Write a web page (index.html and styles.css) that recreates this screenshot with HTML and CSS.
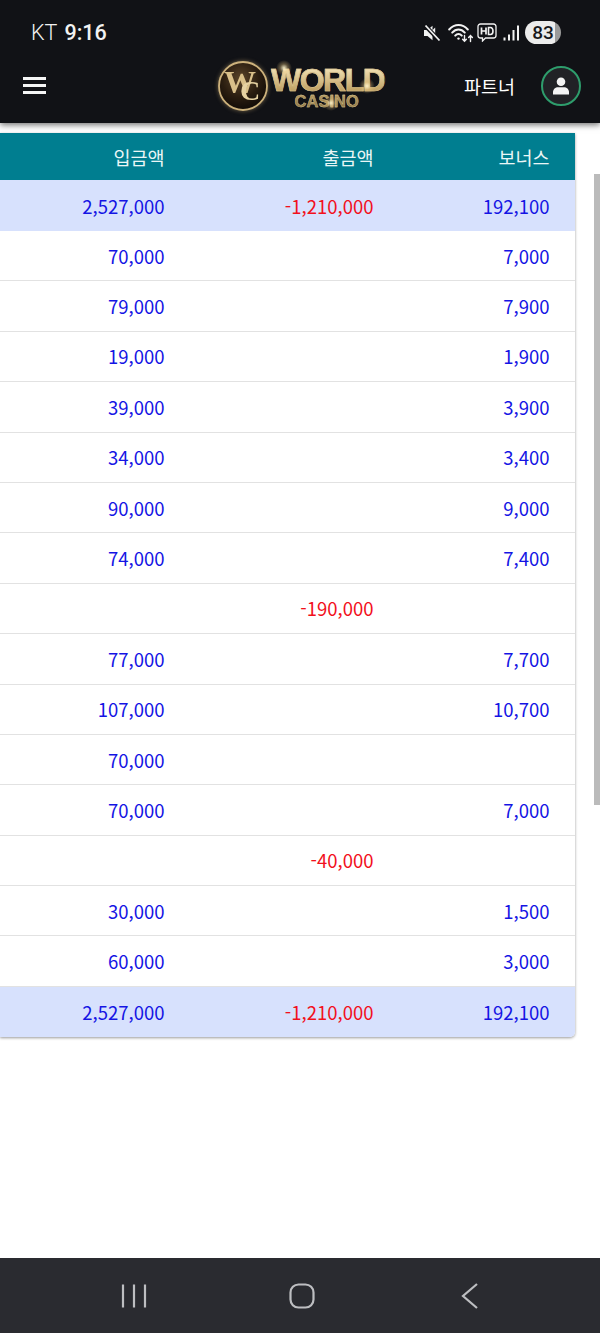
FILE: index.html
```html
<!DOCTYPE html>
<html lang="ko">
<head>
  <meta charset="UTF-8">
  <meta name="viewport" content="width=device-width, initial-scale=1.0">
  <title>World Casino</title>
  <link rel="stylesheet" href="styles.css">
</head>
<body>
  <div class="page">
    <!-- Status bar + top nav -->
    <header class="top">
      <div class="status-bar">
        <div class="status-left"><span class="carrier">KT</span><span class="clock">9:16</span></div>
        <div class="status-icons">
          <svg class="ico-mute" width="18" height="18" viewBox="0 0 18 18">
            <path d="M1 6h3.500L9.500 1.800V16.200L4.500 12H1z" fill="#f2f2f2"/>
            <path d="M9 6.500l3.200-3v7.500z" fill="#f2f2f2"/>
            <path d="M2 1.500L16.500 16.500" stroke="#111216" stroke-width="4"/>
            <path d="M2.500 1.500L16.500 16.500" stroke="#f2f2f2" stroke-width="1.800"/>
          </svg>
          <svg class="ico-wifi" width="26" height="21" viewBox="0 0 26 21" fill="none" stroke="#f2f2f2" stroke-linecap="round">
            <path d="M1.200 7.500C6.500 1.600 14.500 1.600 19.800 7.500" stroke-width="2"/>
            <path d="M4.200 10.600C8 6.400 13 6.400 16.800 10.600" stroke-width="2"/>
            <path d="M7.200 13.600C9.200 11.300 11.800 11.300 13.800 13.600" stroke-width="2"/>
            <circle cx="10.500" cy="16.600" r="1.200" fill="#f2f2f2" stroke="none"/>
            <path d="M16.500 13.500v5.500M14.600 17.200l1.900 2 1.900-2" stroke-width="1.400"/>
            <path d="M22.500 19.500v-6M20.600 15.400l1.900-2 1.900 2" stroke-width="1.400"/>
          </svg>
          <svg class="ico-hd" width="20" height="19" viewBox="0 0 20 19">
            <path d="M3.500 1h13A2.500 2.500 0 0 1 19 3.500v9a2.500 2.500 0 0 1-2.500 2.500H8.500L5.500 18V15h-2A2.500 2.500 0 0 1 1 12.500v-9A2.500 2.500 0 0 1 3.500 1z" fill="none" stroke="#f2f2f2" stroke-width="1.300"/>
            <path d="M4.500 4.500v7M9 4.500v7M4.500 8h4.500" stroke="#f2f2f2" stroke-width="1.700" fill="none"/>
            <path d="M11.500 4.500v7h2c3.300 0 3.300-7 0-7z" stroke="#f2f2f2" stroke-width="1.600" fill="none"/>
          </svg>
          <svg class="ico-signal" width="17" height="16" viewBox="0 0 17 16" fill="#f2f2f2">
            <rect x="0.500" y="12.500" width="2" height="3"/>
            <rect x="5" y="9.500" width="2" height="6"/>
            <rect x="9.500" y="5" width="2" height="10.500"/>
            <rect x="14" y="0.500" width="2" height="15"/>
          </svg>
          <div class="battery">83</div>
        </div>
      </div>
      <nav class="navbar">
        <div class="menu-btn"><span></span><span></span><span></span></div>
        <div class="logo">
          <svg class="logo-mark" width="52" height="52" viewBox="0 0 52 52">
            <defs>
              <radialGradient id="disc" cx="45%" cy="35%" r="70%">
                <stop offset="0" stop-color="#5b452a"/>
                <stop offset="0.55" stop-color="#2a1d10"/>
                <stop offset="1" stop-color="#0c0805"/>
              </radialGradient>
            </defs>
            <circle cx="26" cy="26" r="24" fill="url(#disc)" stroke="#cdb27c" stroke-width="1.800"/>
            <text x="7" y="33" class="logo-w">W</text>
            <text x="23" y="40" class="logo-c">C</text>
          </svg>
          <div class="logo-text">
            <span class="logo-world">WORLD</span>
            <span class="logo-casino">CASINO</span>
          </div>
          <span class="glint glint-a"></span>
          <span class="glint glint-b"></span>
          <span class="glint glint-c"></span>
        </div>
        <div class="nav-right">
          <span class="partner">파트너</span>
          <div class="avatar">
            <svg width="18" height="18" viewBox="0 0 18 18" fill="#f4f4f4">
              <circle cx="9" cy="4.800" r="4.300"/>
              <path d="M1 17.500v-2.300C1 12.300 3.500 10.300 6 10.300h6c2.500 0 5 2 5 4.900v2.300z"/>
            </svg>
          </div>
        </div>
      </nav>
    </header>

    <!-- Deposit table -->
    <main class="content">
      <table class="money-table">
        <colgroup>
          <col class="col-in"><col class="col-out"><col class="col-bonus">
        </colgroup>
        <thead>
          <tr><th>입금액</th><th>출금액</th><th>보너스</th></tr>
        </thead>
        <tbody>
          <tr class="total"><td class="in">2,527,000</td><td class="out">-1,210,000</td><td class="in">192,100</td></tr>
          <tr><td class="in">70,000</td><td></td><td class="in">7,000</td></tr>
          <tr><td class="in">79,000</td><td></td><td class="in">7,900</td></tr>
          <tr><td class="in">19,000</td><td></td><td class="in">1,900</td></tr>
          <tr><td class="in">39,000</td><td></td><td class="in">3,900</td></tr>
          <tr><td class="in">34,000</td><td></td><td class="in">3,400</td></tr>
          <tr><td class="in">90,000</td><td></td><td class="in">9,000</td></tr>
          <tr><td class="in">74,000</td><td></td><td class="in">7,400</td></tr>
          <tr><td></td><td class="out">-190,000</td><td></td></tr>
          <tr><td class="in">77,000</td><td></td><td class="in">7,700</td></tr>
          <tr><td class="in">107,000</td><td></td><td class="in">10,700</td></tr>
          <tr><td class="in">70,000</td><td></td><td></td></tr>
          <tr><td class="in">70,000</td><td></td><td class="in">7,000</td></tr>
          <tr><td></td><td class="out">-40,000</td><td></td></tr>
          <tr><td class="in">30,000</td><td></td><td class="in">1,500</td></tr>
          <tr><td class="in">60,000</td><td></td><td class="in">3,000</td></tr>
          <tr class="total"><td class="in">2,527,000</td><td class="out">-1,210,000</td><td class="in">192,100</td></tr>
        </tbody>
      </table>
      <div class="scroll-thumb"></div>
    </main>

    <!-- Android nav -->
    <footer class="system-nav">
      <svg width="26" height="26" viewBox="0 0 26 26" stroke="#bdbec1" stroke-width="2.200" fill="none">
        <path d="M2 1.500v23M13 1.500v23M24 1.500v23"/>
      </svg>
      <svg width="26" height="26" viewBox="0 0 26 26" stroke="#bdbec1" stroke-width="2.200" fill="none">
        <rect x="1.500" y="1.500" width="23" height="23" rx="8"/>
      </svg>
      <svg width="22" height="26" viewBox="0 0 22 26" stroke="#bdbec1" stroke-width="2.200" fill="none">
        <path d="M20 1L6 13l14 12"/>
      </svg>
    </footer>
  </div>
</body>
</html>
```

FILE: styles.css
```css
/* General Styles */
body {
  margin: 0;
  padding: 0;
  overflow: hidden;
  background: #fff;
  font-family: "Noto Sans CJK KR", "Noto Sans", sans-serif;
}

.page {
  width: 600px;
  height: 1333px;
  display: flex;
  flex-direction: column;
}

/* Top Area */
.top {
  height: 123px;
  flex-shrink: 0;
  background: #111216;
  box-shadow: 0 2px 6px rgba(0, 0, 0, 0.55);
  position: relative;
  z-index: 2;
}

.status-bar {
  height: 52px;
  padding: 13px 39px 0 31px;
  box-sizing: border-box;
  display: flex;
  justify-content: space-between;
  align-items: center;
  color: #f2f2f2;
  font-family: Roboto, sans-serif;
}

.status-left {
  display: flex;
  align-items: baseline;
  gap: 7px;
  font-size: 21.500px;
}

.carrier {
  font-weight: 300;
}

.clock {
  font-weight: 500;
}

.status-icons {
  display: flex;
  align-items: center;
}

.ico-mute {
  margin-right: 7px;
}

.ico-wifi {
  margin-right: 3px;
}

.ico-hd {
  margin-right: 6px;
}

.ico-signal {
  margin-right: 5px;
}

.battery {
  width: 36px;
  height: 23px;
  border-radius: 12px;
  background: linear-gradient(90deg, #ececec 84%, #9a9a9a 84%);
  color: #17181b;
  font-size: 19px;
  font-weight: 500;
  line-height: 23px;
  text-align: center;
}

.navbar {
  height: 71px;
  padding: 0 19px 4px 23px;
  box-sizing: border-box;
  display: flex;
  align-items: center;
}

.menu-btn {
  width: 23px;
  display: flex;
  flex-direction: column;
  gap: 4px;
}

.menu-btn span {
  height: 3px;
  background: #f5f5f5;
}

/* Logo */
.logo {
  margin-left: 171px;
  display: flex;
  align-items: center;
  gap: 2px;
  position: relative;
}

.logo-mark {
  filter: drop-shadow(0 0 2px rgba(210, 180, 120, 0.5));
}

.logo-w,
.logo-c {
  fill: #d9c08a;
  font-family: "Liberation Serif", serif;
  font-weight: 700;
}

.logo-w {
  font-size: 32px;
  letter-spacing: -1px;
}

.logo-c {
  font-size: 28px;
  fill: #e6d2a2;
}

.logo-text {
  display: flex;
  flex-direction: column;
  align-items: center;
  padding-top: 2px;
  font-family: "Liberation Sans", sans-serif;
  font-weight: 700;
  background: linear-gradient(180deg, #f1e0b4 10%, #c5a76b 55%, #8f7544 100%);
  -webkit-background-clip: text;
  background-clip: text;
  color: transparent;
}

.logo-world {
  font-size: 32px;
  line-height: 28px;
  letter-spacing: -1.500px;
  -webkit-text-stroke: 0.600px #d8bf88;
}

.logo-casino {
  font-size: 16.500px;
  line-height: 14px;
  padding-right: 2px;
  -webkit-text-stroke: 0.400px #d8c595;
}

/* sparkles on the logo */
.glint {
  position: absolute;
  width: 16px;
  height: 16px;
  border-radius: 50%;
  background: radial-gradient(circle, rgba(255, 245, 205, 0.95) 0, rgba(240, 205, 130, 0.35) 35%, rgba(240, 205, 130, 0) 70%);
}

.glint-a {
  left: 59px;
  top: 0px;
}

.glint-b {
  left: 142px;
  top: 18px;
}

.glint-c {
  left: 106px;
  top: 35px;
}

.nav-right {
  margin-left: auto;
  display: flex;
  align-items: center;
  gap: 26px;
}

.partner {
  color: #fff;
  font-size: 18.500px;
}

.avatar {
  width: 40px;
  height: 40px;
  box-sizing: border-box;
  border: 2px solid #2e9d6c;
  border-radius: 50%;
  background: #212226;
  display: flex;
  justify-content: center;
  align-items: center;
}

/* Table */
.content {
  flex: 1;
  padding-top: 10px;
  position: relative;
}

.money-table {
  width: 575px;
  table-layout: fixed;
  border-collapse: separate;
  border-spacing: 0;
  border-bottom-right-radius: 5px;
  box-shadow: 0 1px 3px rgba(0, 0, 0, 0.4);
  font-size: 18.500px;
}

.col-in {
  width: 190px;
}

.col-out {
  width: 209px;
}

.money-table th {
  height: 47px;
  padding: 0 25.500px 0 0;
  background: #007e90;
  color: #eaf6f6;
  font-size: 18.500px;
  font-weight: 400;
  text-align: right;
}

.money-table td {
  height: 50.400px;
  box-sizing: border-box;
  padding: 0 25.500px 0 0;
  border-bottom: 1px solid #e2e2e2;
  text-align: right;
}

.money-table .total td {
  height: 51px;
  background: #d7e1fd;
  border-bottom: none;
}

.money-table tr.total:last-child td {
  height: 50px;
}

.money-table tr:last-child td:last-child {
  border-bottom-right-radius: 5px;
}

.in {
  color: #1414e4;
}

.out {
  color: #f2101c;
}

.scroll-thumb {
  position: absolute;
  top: 51px;
  right: 0;
  width: 6px;
  height: 631px;
  background: #bbb;
}

/* System Nav */
.system-nav {
  height: 75px;
  flex-shrink: 0;
  background: #2a2b30;
  padding-left: 121px;
  box-sizing: border-box;
  display: flex;
  gap: 142px;
  align-items: center;
}
```
